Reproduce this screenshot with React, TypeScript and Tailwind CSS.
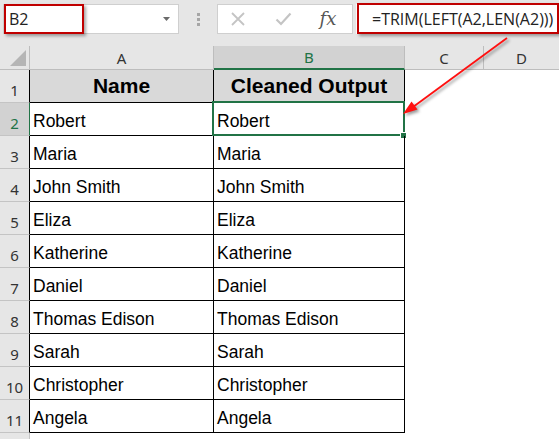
const names = [
  "Robert",
  "Maria",
  "John Smith",
  "Eliza",
  "Katherine",
  "Daniel",
  "Thomas Edison",
  "Sarah",
  "Christopher",
  "Angela",
];

const ui = { fontFamily: '"Open Sans", "Noto Sans", sans-serif' };
const hdr = { fontFamily: '"Noto Sans", "Open Sans", sans-serif' };
const cell = { fontFamily: '"Liberation Sans", Arial, sans-serif' };

function RowHeader({ n, selected, inTable }: { n: string; selected?: boolean; inTable?: boolean }) {
  return (
    <div
      className={`flex w-[30px] shrink-0 items-end justify-center border-b border-r border-b-[#c4c4c4] pb-[2px] text-[15px] leading-[20px] ${
        selected
          ? "bg-[#d2d2d2] text-[#217346] border-r-[#217346]"
          : inTable
          ? "bg-[#e6e6e6] text-[#333] border-r-black"
          : "bg-[#e6e6e6] text-[#333] border-r-[#c4c4c4]"
      }`}
      style={hdr}
    >
      {n}
    </div>
  );
}

export default function App() {
  return (
    <div className="relative h-[439px] w-[559px] overflow-hidden bg-white">
      {/* Formula bar */}
      <div className="flex h-[46px] bg-[#e6e6e6] pt-[4px]">
        <div className="relative ml-[3px] flex h-[30px] w-[176px] items-center border border-[#cfcfcf] bg-white">
          <span className="pl-[5px] text-[16px] leading-none text-[#222]" style={ui}>
            B2
          </span>
          <svg className="ml-auto mr-[8px]" width="7" height="4" viewBox="0 0 7 4">
            <polygon points="0,0 7,0 3.5,4" fill="#6a6a6a" />
          </svg>
          <div className="absolute left-0 top-[-1px] h-[30px] w-[80px] border-2 border-[#c00000] shadow-[2px_2px_3px_rgba(0,0,0,0.35)]" />
        </div>
        <div className="flex h-[30px] w-[38px] flex-col items-center justify-center gap-[2px]">
          <div className="h-[3px] w-[3px] bg-[#a6a6a6]" />
          <div className="h-[3px] w-[3px] bg-[#a6a6a6]" />
          <div className="h-[3px] w-[3px] bg-[#a6a6a6]" />
        </div>
        <div className="flex h-[30px] w-[136px] items-center gap-[15px] border border-[#cfcfcf] bg-white pl-[5px]">
          <div className="flex w-[30px] justify-center">
            <svg width="16" height="14" viewBox="0 0 16 14">
              <path d="M2 1 L14 13 M14 1 L2 13" stroke="#c4c4c4" strokeWidth="1.8" fill="none" />
            </svg>
          </div>
          <div className="flex w-[30px] justify-center">
            <svg width="17" height="14" viewBox="0 0 17 14">
              <path d="M1.5 7.5 L6 12 L15.5 1.5" stroke="#c4c4c4" strokeWidth="2.2" fill="none" />
            </svg>
          </div>
          <div className="flex w-[30px] justify-center">
            <span
              className="text-[18px] italic leading-none text-[#555]"
              style={{ fontFamily: '"DejaVu Serif", "Liberation Serif", serif' }}
            >
              fx
            </span>
          </div>
        </div>
        <div className="relative ml-[3px] flex h-[30px] flex-1 items-center bg-white pl-[16px]">
          <span className="text-[16px] leading-none text-[#222]" style={ui}>
            =TRIM(LEFT(A2,LEN(A2)))
          </span>
          <div className="absolute left-[1px] top-[-1px] h-[31px] w-[202px] border-[2.5px] border-[#c00000] shadow-[2px_2px_3px_rgba(0,0,0,0.35)]" />
        </div>
      </div>

      {/* Column headers */}
      <div className="flex h-[24px] bg-[#e6e6e6] text-[15px] text-[#333]" style={hdr}>
        <div className="relative w-[30px] shrink-0 border-b border-r border-[#bdbdbd]">
          <svg className="absolute left-[10px] top-[4px]" width="16" height="16" viewBox="0 0 16 16">
            <polygon points="16,0 16,16 0,16" fill="#b5b5b5" />
          </svg>
        </div>
        <div className="flex w-[184px] shrink-0 items-center justify-center border-b border-r border-[#bdbdbd] leading-[20px]">
          A
        </div>
        <div className="flex w-[191px] shrink-0 items-center justify-center border-b-2 border-r border-b-[#217346] border-r-[#bdbdbd] bg-[#d2d2d2] leading-[20px] text-[#217346]">
          B
        </div>
        <div className="flex w-[79px] shrink-0 items-center justify-center border-b border-r border-[#bdbdbd] leading-[20px]">
          C
        </div>
        <div className="flex flex-1 items-center justify-center border-b border-[#bdbdbd] leading-[20px]">
          D
        </div>
      </div>

      {/* Row 1 header row */}
      <div className="flex h-[33px]">
        <RowHeader n="1" inTable />
        <div
          className="flex w-[184px] shrink-0 items-end justify-center border-b border-r border-black bg-[#d9d9d9] pb-[4px] text-[21px] font-bold leading-[24px] text-black"
          style={cell}
        >
          Name
        </div>
        <div
          className="flex w-[191px] shrink-0 items-end justify-center border-b border-r border-black bg-[#d9d9d9] pb-[4px] text-[21px] font-bold leading-[24px] text-black"
          style={cell}
        >
          Cleaned Output
        </div>
        <div className="flex-1" />
      </div>

      {names.map((name, i) => (
        <div key={name} className="flex h-[33px]">
          <RowHeader n={String(i + 2)} inTable selected={i === 0} />
          <div
            className="flex w-[184px] shrink-0 items-end border-b border-r border-black pb-[4px] pl-[3px] text-[17.5px] leading-[20px] text-black"
            style={cell}
          >
            {name}
          </div>
          <div
            className="relative flex w-[191px] shrink-0 items-end border-b border-r border-black pb-[4px] pl-[3px] text-[17.5px] leading-[20px] text-black"
            style={cell}
          >
            {name}
            {i === 0 && (
              <>
                <div className="absolute -left-[2px] -top-[2px] -right-[1px] bottom-[-1px] border-2 border-[#217346]" />
                <div className="absolute bottom-[-4px] right-[-3px] h-[7px] w-[7px] border border-white bg-[#217346]" />
              </>
            )}
          </div>
          <div className="flex-1" />
        </div>
      ))}

      <div className="flex h-[33px]">
        <RowHeader n="" />
        <div className="flex-1" />
      </div>

      {/* Annotation arrow */}
      <svg
        className="pointer-events-none absolute left-0 top-0 drop-shadow-[2px_2px_1.5px_rgba(0,0,0,0.4)]"
        width="559"
        height="439"
        viewBox="0 0 559 439"
      >
        <line x1="507" y1="38" x2="413" y2="107" stroke="#ff1010" strokeWidth="1.8" />
        <polygon points="403,114 411.5,101.5 417.5,109.5" fill="#ff1010" />
      </svg>
    </div>
  );
}
